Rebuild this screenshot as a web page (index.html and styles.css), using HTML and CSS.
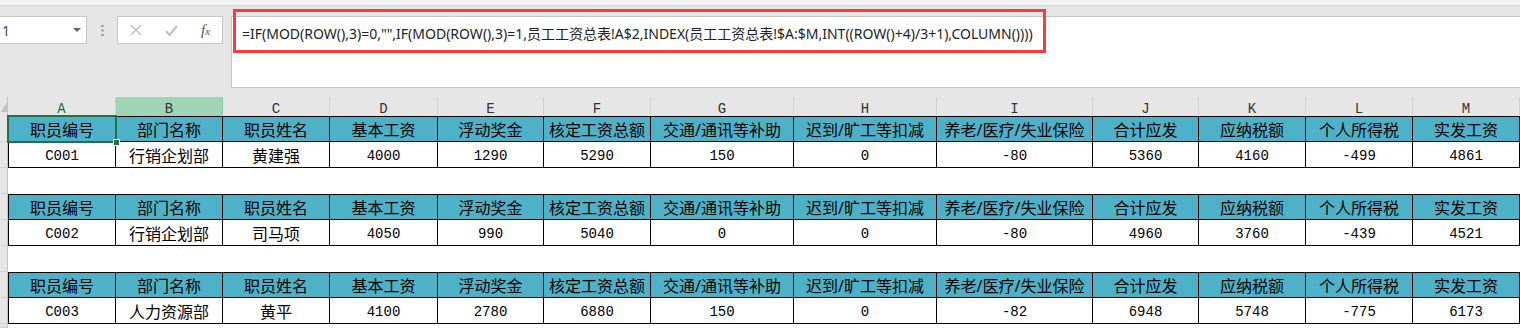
FILE: index.html
```html
<!DOCTYPE html>
<html lang="zh-CN">
<head>
    <meta charset="UTF-8">
    <title>员工工资条</title>
    <link rel="stylesheet" href="styles.css">
</head>
<body>
    <div class="ribbon-edge"></div>

    <!-- name box + formula bar -->
    <div class="bar-area">
        <div class="name-box">
            <span class="name-text">1</span>
            <svg class="drop" width="8" height="4" viewBox="0 0 8 4"><path d="M0 0H8L4 4Z" fill="#666"/></svg>
        </div>
        <svg class="grip" width="3" height="11" viewBox="0 0 3 11">
            <rect x="0" y="0" width="3" height="2" fill="#a8a8a8"/>
            <rect x="0" y="4.5" width="3" height="2" fill="#a8a8a8"/>
            <rect x="0" y="9" width="3" height="2" fill="#a8a8a8"/>
        </svg>
        <div class="fx-box">
            <svg class="icon cancel" width="12" height="12" viewBox="0 0 12 12"><path d="M1 1L11 11M11 1L1 11" stroke="#bdbdbd" stroke-width="1.4" fill="none"/></svg>
            <svg class="icon enter" width="13" height="11" viewBox="0 0 13 11"><path d="M1 6L4.5 10L12 1" stroke="#bdbdbd" stroke-width="2" fill="none"/></svg>
            <span class="fx">f<span class="fx-x">x</span></span>
        </div>
        <div class="formula-box">
            <span class="formula">=IF(MOD(ROW(),3)=0,"",IF(MOD(ROW(),3)=1,员工工资总表!A$2,INDEX(员工工资总表!$A:$M,INT((ROW()+4)/3+1),COLUMN())))</span>
        </div>
        <div class="red-box"></div>
    </div>

    <!-- sheet -->
    <div class="sheet">
        <div class="row col-row">
            <div class="corner"></div>
            <div class="col-head sel-col">A</div>
            <div class="col-head active">B</div>
            <div class="col-head">C</div>
            <div class="col-head">D</div>
            <div class="col-head">E</div>
            <div class="col-head">F</div>
            <div class="col-head">G</div>
            <div class="col-head">H</div>
            <div class="col-head">I</div>
            <div class="col-head">J</div>
            <div class="col-head">K</div>
            <div class="col-head">L</div>
            <div class="col-head">M</div>
        </div>

        <div class="row head-row">
            <div class="row-head"></div>
            <div class="cell first sel">职员编号</div>
            <div class="cell">部门名称</div>
            <div class="cell">职员姓名</div>
            <div class="cell">基本工资</div>
            <div class="cell">浮动奖金</div>
            <div class="cell">核定工资总额</div>
            <div class="cell">交通/通讯等补助</div>
            <div class="cell">迟到/旷工等扣减</div>
            <div class="cell">养老/医疗/失业保险</div>
            <div class="cell">合计应发</div>
            <div class="cell">应纳税额</div>
            <div class="cell">个人所得税</div>
            <div class="cell">实发工资</div>
        </div>
        <div class="row data-row">
            <div class="row-head"></div>
            <div class="cell first num">C001</div>
            <div class="cell">行销企划部</div>
            <div class="cell">黄建强</div>
            <div class="cell num">4000</div>
            <div class="cell num">1290</div>
            <div class="cell num">5290</div>
            <div class="cell num">150</div>
            <div class="cell num">0</div>
            <div class="cell num">-80</div>
            <div class="cell num">5360</div>
            <div class="cell num">4160</div>
            <div class="cell num">-499</div>
            <div class="cell num">4861</div>
        </div>
        <div class="row blank-row"><div class="row-head"></div><div class="blank"></div></div>

        <div class="row head-row">
            <div class="row-head"></div>
            <div class="cell first">职员编号</div>
            <div class="cell">部门名称</div>
            <div class="cell">职员姓名</div>
            <div class="cell">基本工资</div>
            <div class="cell">浮动奖金</div>
            <div class="cell">核定工资总额</div>
            <div class="cell">交通/通讯等补助</div>
            <div class="cell">迟到/旷工等扣减</div>
            <div class="cell">养老/医疗/失业保险</div>
            <div class="cell">合计应发</div>
            <div class="cell">应纳税额</div>
            <div class="cell">个人所得税</div>
            <div class="cell">实发工资</div>
        </div>
        <div class="row data-row">
            <div class="row-head"></div>
            <div class="cell first num">C002</div>
            <div class="cell">行销企划部</div>
            <div class="cell">司马项</div>
            <div class="cell num">4050</div>
            <div class="cell num">990</div>
            <div class="cell num">5040</div>
            <div class="cell num">0</div>
            <div class="cell num">0</div>
            <div class="cell num">-80</div>
            <div class="cell num">4960</div>
            <div class="cell num">3760</div>
            <div class="cell num">-439</div>
            <div class="cell num">4521</div>
        </div>
        <div class="row blank-row"><div class="row-head"></div><div class="blank"></div></div>

        <div class="row head-row">
            <div class="row-head"></div>
            <div class="cell first">职员编号</div>
            <div class="cell">部门名称</div>
            <div class="cell">职员姓名</div>
            <div class="cell">基本工资</div>
            <div class="cell">浮动奖金</div>
            <div class="cell">核定工资总额</div>
            <div class="cell">交通/通讯等补助</div>
            <div class="cell">迟到/旷工等扣减</div>
            <div class="cell">养老/医疗/失业保险</div>
            <div class="cell">合计应发</div>
            <div class="cell">应纳税额</div>
            <div class="cell">个人所得税</div>
            <div class="cell">实发工资</div>
        </div>
        <div class="row data-row">
            <div class="row-head"></div>
            <div class="cell first num">C003</div>
            <div class="cell">人力资源部</div>
            <div class="cell">黄平</div>
            <div class="cell num">4100</div>
            <div class="cell num">2780</div>
            <div class="cell num">6880</div>
            <div class="cell num">150</div>
            <div class="cell num">0</div>
            <div class="cell num">-82</div>
            <div class="cell num">6948</div>
            <div class="cell num">5748</div>
            <div class="cell num">-775</div>
            <div class="cell num">6173</div>
        </div>
        <div class="row blank-row last"><div class="row-head"></div><div class="blank"></div></div>
    </div>
</body>
</html>
```
FILE: styles.css
```css
body {
    margin: 0;
    width: 1520px;
    height: 328px;
    overflow: hidden;
    background-color: #fff;
    font-family: "Noto Sans", "Noto Sans CJK SC", sans-serif;
}

.ribbon-edge {
    height: 5px;
    background-color: #f3f3f3;
    border-bottom: 1px solid #d6d6d6;
}

.bar-area {
    position: relative;
    display: flex;
    align-items: flex-start;
    height: 91px;
    padding-top: 10px;
    box-sizing: border-box;
    background-color: #e6e6e6;
}

.name-box {
    width: 88px;
    height: 28px;
    margin-left: -1px;
    padding: 0 5px 0 2px;
    box-sizing: border-box;
    display: flex;
    align-items: center;
    justify-content: space-between;
    background-color: #fff;
    border: 1px solid #c6c6c6;
}

.name-text {
    font-size: 14px;
    color: #3a4a5a;
}

.drop {
    margin-top: -1px;
}

.grip {
    margin: 9px 0 0 14px;
}

.fx-box {
    width: 106px;
    height: 28px;
    margin-left: 13px;
    box-sizing: border-box;
    display: flex;
    align-items: center;
    background-color: #fff;
    border: 1px solid #c6c6c6;
}

.cancel {
    margin-left: 12px;
}

.enter {
    margin-left: 23px;
}

.fx {
    margin-left: 23px;
    font-family: "Liberation Serif", serif;
    font-style: italic;
    font-size: 15px;
    color: #555;
}

.fx-x {
    font-size: 11px;
}

.formula-box {
    flex: 1;
    height: 72px;
    margin-left: 8px;
    padding: 5px 0 0 10px;
    box-sizing: border-box;
    background-color: #fff;
    border: 1px solid #c6c6c6;
    border-right: none;
}

.formula {
    font-size: 14px;
    color: #222;
    white-space: nowrap;
}

.red-box {
    position: absolute;
    left: 233px;
    top: 3px;
    width: 813px;
    height: 44px;
    box-sizing: border-box;
    border: 3px solid #fd3b3d;
}

/* sheet */
.row {
    display: grid;
    grid-template-columns: 8px 108px 107px 107px 108px 106px 107px 143px 143px 156px 106px 107px 107px 107px;
    height: 26px;
}

.row.last {
    height: 4px;
}

.col-row {
    height: 19px;
    background-color: #e6e6e6;
}

.corner {
    border-right: 1px solid #c4c4c4;
    background: linear-gradient(to bottom right, transparent 55%, #c2c2c2 55%) no-repeat 0 3px / 8px 12px;
}

.col-head {
    padding-top: 5px;
    box-sizing: border-box;
    text-align: center;
    font-family: "Liberation Mono", monospace;
    font-size: 14px;
    line-height: 14px;
    color: #333;
    border-right: 1px solid #d2d2d2;
}

.col-head.sel-col {
    color: #217346;
}

.col-head.active {
    background-color: #9fd5b7;
    border-right-color: #8fc8a8;
}

.row-head {
    background-color: #e6e6e6;
    border-right: 1px solid #c4c4c4;
    border-bottom: 1px solid #d0d0d0;
    box-sizing: border-box;
}

.cell {
    display: flex;
    align-items: center;
    justify-content: center;
    box-sizing: border-box;
    border-right: 1px solid #000;
    font-size: 16px;
    color: #000;
    white-space: nowrap;
    overflow: hidden;
}

.cell.first {
    border-left: 1px solid #000;
}

.head-row .cell {
    background-color: #4db2c8;
    border-top: 1px solid #000;
    border-bottom: 1px solid #000;
}

.data-row .cell {
    background-color: #fff;
    border-bottom: 1px solid #000;
}

.cell.num {
    font-family: "Liberation Mono", monospace;
    font-size: 14px;
    padding-top: 3px;
}

.cell.sel {
    position: relative;
    z-index: 1;
    overflow: visible;
    outline: 2px solid #217346;
    outline-offset: -1px;
}

.cell.sel::after {
    content: "";
    position: absolute;
    right: -5px;
    bottom: -5px;
    width: 5px;
    height: 5px;
    background-color: #217346;
    border: 1px solid #fff;
}

.blank {
    grid-column: 2 / -1;
    background-color: #fff;
}
```
